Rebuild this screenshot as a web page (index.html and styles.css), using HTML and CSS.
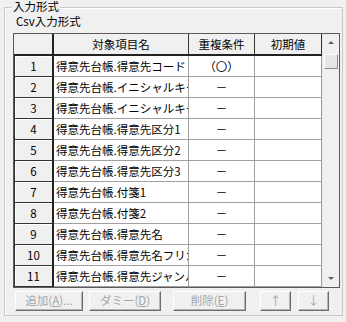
FILE: index.html
```html
<!DOCTYPE html>
<html lang="ja">
<head>
<meta charset="utf-8">
<link rel="stylesheet" href="styles.css">
</head>
<body>
<div class="group">
  <div class="group-title">入力形式</div>
  <div class="sub">Csv入力形式</div>
  <div class="grid">
    <div class="table">
      <div class="hc corner"></div>
      <div class="hc">対象項目名</div>
      <div class="hc">重複条件</div>
      <div class="hc">初期値</div>

      <div class="rh">1</div><div class="c name">得意先台帳.得意先コード</div><div class="c ctr">（〇）</div><div class="c"></div>
      <div class="rh">2</div><div class="c name">得意先台帳.イニシャルキー</div><div class="c ctr">－</div><div class="c"></div>
      <div class="rh">3</div><div class="c name">得意先台帳.イニシャルキー</div><div class="c ctr">－</div><div class="c"></div>
      <div class="rh">4</div><div class="c name">得意先台帳.得意先区分1</div><div class="c ctr">－</div><div class="c"></div>
      <div class="rh">5</div><div class="c name">得意先台帳.得意先区分2</div><div class="c ctr">－</div><div class="c"></div>
      <div class="rh">6</div><div class="c name">得意先台帳.得意先区分3</div><div class="c ctr">－</div><div class="c"></div>
      <div class="rh">7</div><div class="c name">得意先台帳.付箋1</div><div class="c ctr">－</div><div class="c"></div>
      <div class="rh">8</div><div class="c name">得意先台帳.付箋2</div><div class="c ctr">－</div><div class="c"></div>
      <div class="rh">9</div><div class="c name">得意先台帳.得意先名</div><div class="c ctr">－</div><div class="c"></div>
      <div class="rh">10</div><div class="c name">得意先台帳.得意先名フリガナ</div><div class="c ctr">－</div><div class="c"></div>
      <div class="rh">11</div><div class="c name">得意先台帳.得意先ジャンル</div><div class="c ctr">－</div><div class="c"></div>
    </div>
    <div class="vscroll">
      <div class="arrow up"></div>
      <div class="thumb"></div>
      <div class="track"></div>
      <div class="arrow down"></div>
    </div>
  </div>
  <div class="buttons">
    <div class="btn b-add">追加(<u>A</u>)...</div>
    <div class="btn b-dummy">ダミー(<u>D</u>)</div>
    <div class="btn b-del">削除(<u>E</u>)</div>
    <div class="btn b-up">↑</div>
    <div class="btn b-down">↓</div>
  </div>
</div>
</body>
</html>
```

FILE: styles.css
```css
* { box-sizing: border-box; }
html, body { margin: 0; padding: 0; }
body {
  width: 346px;
  height: 322px;
  background: #f0f0f0;
  font-family: "Noto Sans CJK JP", "Noto Sans", sans-serif;
  font-size: 11.5px;
  color: #000;
  overflow: hidden;
  padding-top: 7px;
}
.group {
  position: relative;
  margin-left: 4px;
  width: 339px;
  height: 309px;
  border: 1px solid #c8c8c8;
  box-shadow: inset 1px 1px 0 #fff;
}
.group-title {
  position: absolute;
  left: 7px;
  top: -8px;
  padding: 0 1px;
  line-height: 13px;
  background: #f0f0f0;
}
.sub {
  padding: 6px 0 0 11px;
  line-height: 14px;
  height: 25px;
}
.grid {
  display: flex;
  margin-left: 8px;
  width: 327px;
  height: 255px;
  border: 1px solid #5a5a5a;
  background: #fff;
}
.table {
  display: grid;
  grid-template-columns: 40px 135px 66px 67px;
  grid-template-rows: 22px repeat(11, 21px);
  width: 308px;
}
.hc {
  background: #f0f0f0;
  border-right: 1px solid #333;
  border-bottom: 2px solid #222;
  text-align: center;
  line-height: 20px;
  white-space: nowrap;
  overflow: hidden;
}
.hc.corner { border-right: 2px solid #222; }
.rh {
  background: #f0f0f0;
  border-right: 2px solid #222;
  border-bottom: 1px solid #333;
  border-left: 1px solid #333;
  box-shadow: inset 1px 1px 0 #fff;
  text-align: center;
  line-height: 20px;
}
.c {
  border-right: 1px solid #a0a0a0;
  border-bottom: 1px solid #a0a0a0;
  line-height: 20px;
  white-space: nowrap;
  overflow: hidden;
}
.c.name { padding-left: 2px; }
.c.ctr { text-align: center; }
.vscroll {
  width: 17px;
  display: flex;
  flex-direction: column;
  background: #f0f0f0;
  border-left: 1px solid #e8e8e8;
}
.arrow {
  height: 17px;
  display: flex;
  align-items: center;
  justify-content: center;
}
.arrow::before {
  content: "";
  width: 0;
  height: 0;
  border-left: 3px solid transparent;
  border-right: 3px solid transparent;
}
.arrow.up::before { border-bottom: 3px solid #606060; }
.arrow.down::before { border-top: 3px solid #606060; }
.thumb {
  margin: 3px 1px 0 1px;
  height: 15px;
  background: #e6e6e6;
  border: 1px solid;
  border-color: #fff #8c8c8c #8c8c8c #fff;
}
.track { flex: 1; }
.buttons {
  display: flex;
  margin-top: 3px;
  padding-left: 10px;
}
.btn {
  height: 20px;
  line-height: 17px;
  text-align: center;
  color: #a6a6a6;
  background: #f0f0f0;
  border: 1px solid;
  border-color: #fff #6c6c6c #6c6c6c #fff;
  box-shadow: inset -1px -1px 0 #b4b4b4;
  white-space: nowrap;
}
.btn u { text-decoration: underline; }
.b-add { width: 68px; }
.b-dummy { width: 72px; margin-left: 6px; }
.b-del { width: 73px; margin-left: 12px; }
.b-up { width: 31px; margin-left: 14px; }
.b-down { width: 31px; margin-left: 7px; }
```
